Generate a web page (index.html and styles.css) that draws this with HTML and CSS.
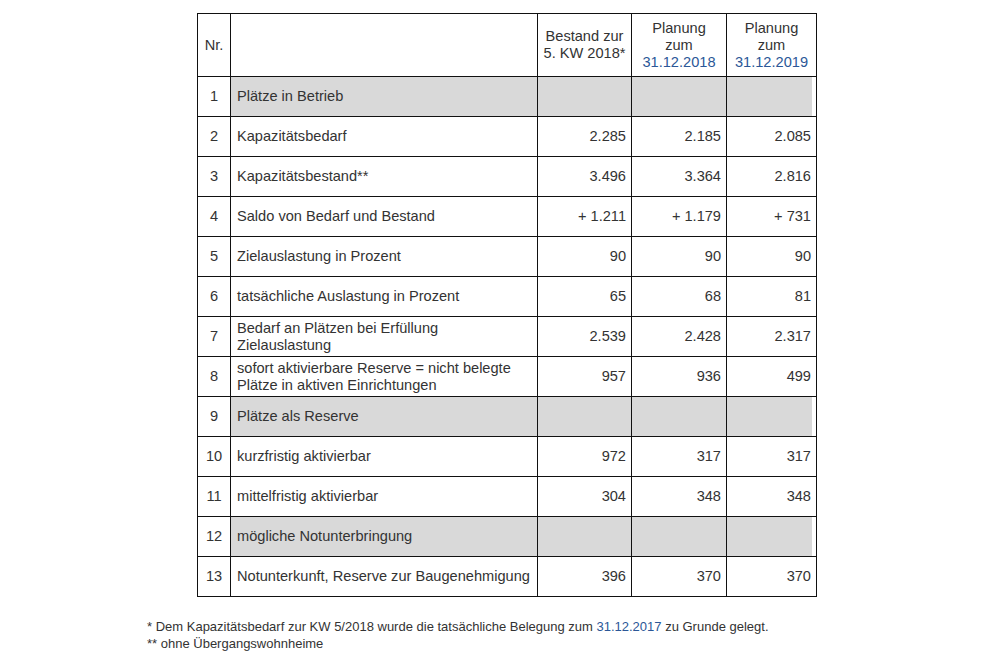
FILE: index.html
```html
<!DOCTYPE html>
<html lang="de">
<head>
<meta charset="utf-8">
<title>Plätze</title>
<link rel="stylesheet" href="styles.css">
</head>
<body>
<main class="page">
  <table class="data">
    <colgroup>
      <col class="c-nr"><col class="c-label"><col class="c-v1"><col class="c-v2"><col class="c-v3">
    </colgroup>
    <thead>
      <tr class="head">
        <th class="nr">Nr.</th>
        <th></th>
        <th class="hv">Bestand zur<br>5. KW 2018*</th>
        <th class="hv">Planung<br>zum<br><span class="blue">31.12.2018</span></th>
        <th class="hv">Planung<br>zum<br><span class="blue">31.12.2019</span></th>
      </tr>
    </thead>
    <tbody>
      <tr class="grey"><td class="nr">1</td><td class="label">Plätze in Betrieb</td><td></td><td></td><td class="last"></td></tr>
      <tr><td class="nr">2</td><td class="label">Kapazitätsbedarf</td><td class="num">2.285</td><td class="num">2.185</td><td class="num">2.085</td></tr>
      <tr><td class="nr">3</td><td class="label">Kapazitätsbestand**</td><td class="num">3.496</td><td class="num">3.364</td><td class="num">2.816</td></tr>
      <tr><td class="nr">4</td><td class="label">Saldo von Bedarf und Bestand</td><td class="num">+ 1.211</td><td class="num">+ 1.179</td><td class="num">+ 731</td></tr>
      <tr><td class="nr">5</td><td class="label">Zielauslastung in Prozent</td><td class="num">90</td><td class="num">90</td><td class="num">90</td></tr>
      <tr><td class="nr">6</td><td class="label">tatsächliche Auslastung in Prozent</td><td class="num">65</td><td class="num">68</td><td class="num">81</td></tr>
      <tr><td class="nr">7</td><td class="label">Bedarf an Plätzen bei Erfüllung<br>Zielauslastung</td><td class="num">2.539</td><td class="num">2.428</td><td class="num">2.317</td></tr>
      <tr><td class="nr">8</td><td class="label">sofort aktivierbare Reserve = nicht belegte<br>Plätze in aktiven Einrichtungen</td><td class="num">957</td><td class="num">936</td><td class="num">499</td></tr>
      <tr class="grey"><td class="nr">9</td><td class="label">Plätze als Reserve</td><td></td><td></td><td class="last"></td></tr>
      <tr><td class="nr">10</td><td class="label">kurzfristig aktivierbar</td><td class="num">972</td><td class="num">317</td><td class="num">317</td></tr>
      <tr><td class="nr">11</td><td class="label">mittelfristig aktivierbar</td><td class="num">304</td><td class="num">348</td><td class="num">348</td></tr>
      <tr class="grey"><td class="nr">12</td><td class="label">mögliche Notunterbringung</td><td></td><td></td><td class="last"></td></tr>
      <tr><td class="nr">13</td><td class="label">Notunterkunft, Reserve zur Baugenehmigung</td><td class="num">396</td><td class="num">370</td><td class="num">370</td></tr>
    </tbody>
  </table>
  <div class="notes">
    <p>* Dem Kapazitätsbedarf zur KW 5/2018 wurde die tatsächliche Belegung zum <span class="blue">31.12.2017</span> zu Grunde gelegt.</p>
    <p>** ohne Übergangswohnheime</p>
  </div>
</main>
</body>
</html>
```

FILE: styles.css
```css
html, body {
  margin: 0;
  padding: 0;
  background: #fff;
}
body {
  font-family: "Liberation Sans", Arial, sans-serif;
  color: #333;
}
.page {
  display: flex;
  flex-direction: column;
  padding: 13px 0 0 0;
}
.data {
  margin-left: 197px;
  border-collapse: collapse;
  table-layout: fixed;
  width: 619px;
  font-size: 14.6px;
}
.c-nr { width: 33px; }
.c-label { width: 307px; }
.c-v1 { width: 94px; }
.c-v2 { width: 95px; }
.c-v3 { width: 90px; }
.data th, .data td {
  border: 1px solid #111;
  padding: 0 5px;
  height: 39px;
  vertical-align: middle;
  line-height: 17px;
  overflow: hidden;
  white-space: nowrap;
}
.data .head th {
  height: 62px;
  font-weight: normal;
}
.data th.hv {
  text-align: center;
  padding: 0 2px;
}
.data .nr {
  text-align: center;
  padding: 0;
}
.data td.label {
  padding-left: 6px;
}
.data td.num {
  text-align: right;
  padding-right: 5px;
}
.grey td { background: #d9d9d9; }
.grey td.nr { background: #fff; }
.grey td.last { box-shadow: inset -4px 0 0 #fff; }
.blue { color: #2b5797; }
.notes {
  margin: 21px 0 0 147px;
  font-size: 13px;
  line-height: 17px;
}
.notes p { margin: 0; }
```
